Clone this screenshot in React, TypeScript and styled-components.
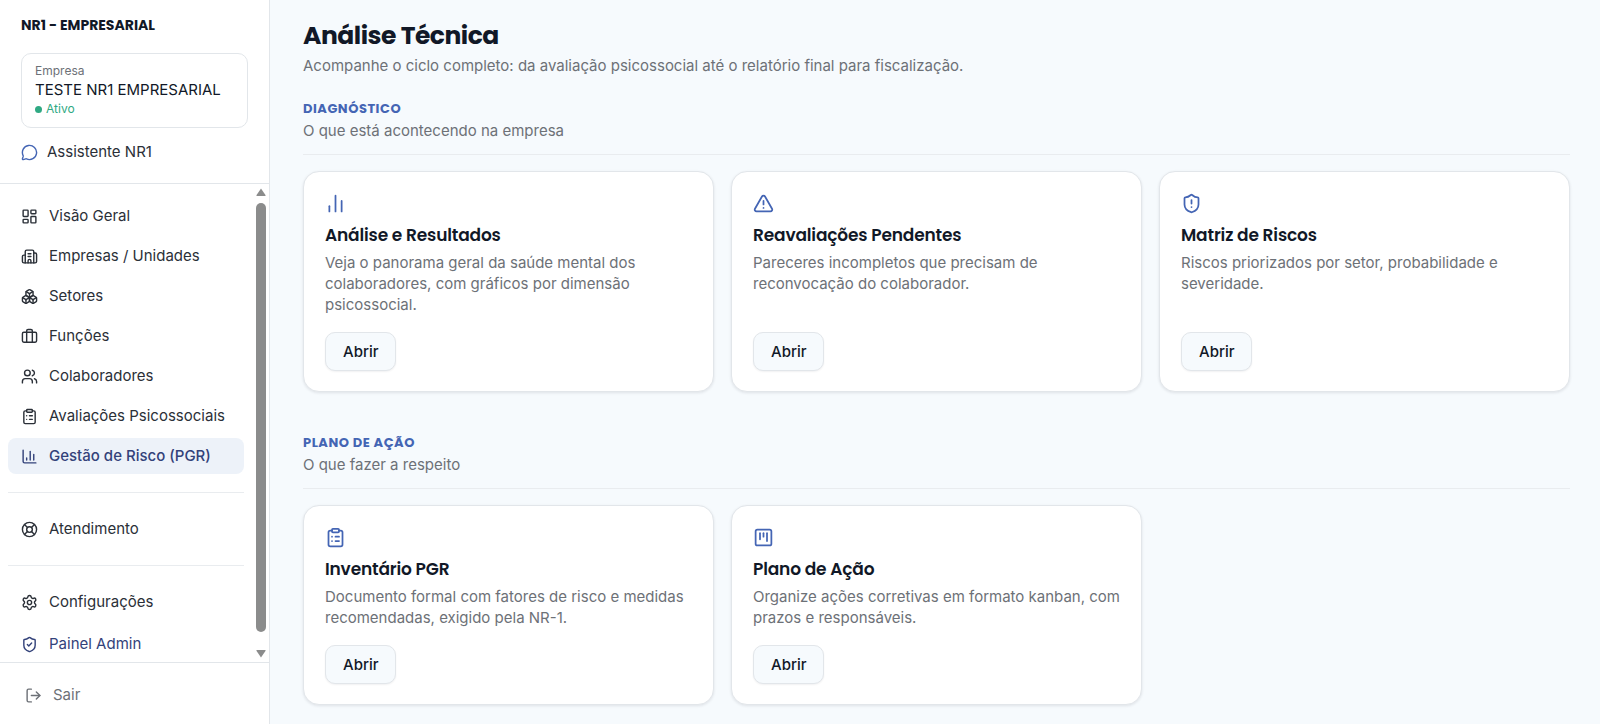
import React from "react";
import styled, { createGlobalStyle } from "styled-components";
import {
  Boxes,
  Briefcase,
  Building2,
  ChartColumn,
  ChartNoAxesColumn,
  ClipboardList,
  LayoutDashboard,
  LifeBuoy,
  LogOut,
  MessageCircle,
  Settings,
  ShieldAlert,
  ShieldCheck,
  SquareKanban,
  TriangleAlert,
  Users,
  type LucideIcon,
} from "lucide-react";

const color = {
  page: "#f6fafd",
  surface: "#ffffff",
  line: "#e2e6ea",
  softLine: "#e9ecef",
  ink: "#111827",
  text: "#2b3038",
  muted: "#6d7177",
  primary: "#4465b4",
  navy: "#33427a",
  active: "#edf2f9",
  green: "#2fa983",
  thumb: "#8b8c8c",
};

const heading = `Poppins, Inter, "Open Sans", sans-serif`;

const GlobalStyle = createGlobalStyle`
  *, *::before, *::after { box-sizing: border-box; }
  body {
    margin: 0;
    background: ${color.page};
    color: ${color.text};
    font-family: Inter, "Liberation Sans", sans-serif;
    font-size: 15px;
    line-height: 22px;
  }
  h1, h2, h3, p { margin: 0; }
  a { color: inherit; text-decoration: none; }
  svg { display: block; flex: none; }
`;

const Shell = styled.div`
  display: flex;
  height: 100vh;
`;

const Sidebar = styled.aside`
  display: flex;
  flex-direction: column;
  flex: none;
  width: 270px;
  background: ${color.surface};
  border-right: 1px solid ${color.line};
`;

const SidebarTop = styled.div`
  display: flex;
  flex-direction: column;
  padding: 14px 21px 20px;
  border-bottom: 1px solid ${color.line};
`;

const Brand = styled.div`
  font-family: ${heading};
  font-size: 14px;
  font-weight: 700;
  line-height: 22px;
  color: ${color.ink};
`;

const Company = styled.div`
  display: flex;
  flex-direction: column;
  margin-top: 17px;
  padding: 8px 13px 9px;
  border: 1px solid ${color.line};
  border-radius: 10px;
`;

const CompanyLabel = styled.span`
  font-size: 12px;
  line-height: 18px;
  color: ${color.muted};
`;

const CompanyName = styled.span`
  line-height: 20px;
  color: ${color.ink};
`;

const Status = styled.span`
  display: flex;
  align-items: center;
  gap: 4px;
  font-size: 12px;
  line-height: 18px;
  color: ${color.green};

  &::before {
    content: "";
    width: 7px;
    height: 7px;
    border-radius: 50%;
    background: currentColor;
  }
`;

const Assistant = styled.a`
  display: flex;
  align-items: center;
  gap: 9px;
  margin-top: 13px;

  svg { color: ${color.primary}; }
`;

const NavArea = styled.div`
  display: flex;
  flex: 1;
  min-height: 0;
`;

const Nav = styled.nav`
  flex: 1;
  padding: 14px 0 0 8px;
  overflow: hidden;
`;

const NavGroup = styled.div<{ $gap: number }>`
  display: flex;
  flex-direction: column;
  gap: ${(p) => p.$gap}px;

  & + & {
    margin-top: 18px;
    padding-top: 18px;
    border-top: 1px solid ${color.softLine};
  }
`;

const NavLink = styled.a<{ $tone: "normal" | "active" | "admin" }>`
  display: flex;
  align-items: center;
  gap: 11px;
  height: 36px;
  padding: 0 13px;
  border-radius: 8px;
  background: ${(p) => (p.$tone === "active" ? color.active : "transparent")};
  color: ${(p) => (p.$tone === "normal" ? color.text : color.navy)};
  font-weight: ${(p) => (p.$tone === "active" ? 500 : 400)};
`;

const Scrollbar = styled.div`
  display: flex;
  flex-direction: column;
  align-items: center;
  gap: 7px;
  flex: none;
  width: 25px;
  padding: 4px 3px 4px 12px;
`;

const Arrow = styled.svg`
  width: 10px;
  height: 8px;
  fill: ${color.thumb};
`;

const Thumb = styled.div`
  flex: 1;
  width: 10px;
  margin-bottom: 11px;
  border-radius: 5px;
  background: ${color.thumb};
`;

const SidebarFoot = styled.div`
  padding: 21px 25px 18px;
  border-top: 1px solid ${color.line};
`;

const Logout = styled.button`
  display: flex;
  align-items: center;
  gap: 11px;
  padding: 0;
  border: 0;
  background: none;
  color: ${color.muted};
  font: inherit;
  cursor: pointer;
`;

const Main = styled.main`
  flex: 1;
  min-width: 0;
  padding: 18px 30px 0 33px;
  overflow: hidden;
`;

const Title = styled.h1`
  font-family: ${heading};
  font-size: 25px;
  font-weight: 700;
  line-height: 36px;
  letter-spacing: -0.02em;
  color: ${color.ink};
`;

const Lead = styled.p`
  padding-top: 1px;
  color: ${color.muted};
`;

const Section = styled.section`
  margin-top: 23px;

  & + & { margin-top: 42px; }
`;

const SectionHead = styled.header`
  display: flex;
  flex-direction: column;
  gap: 2px;
  padding-bottom: 12px;
  border-bottom: 1px solid ${color.softLine};
  color: ${color.muted};
`;

const SectionTitle = styled.h2`
  font-family: ${heading};
  font-size: 13px;
  font-weight: 700;
  line-height: 18px;
  letter-spacing: 0.04em;
  text-transform: uppercase;
  color: ${color.primary};
`;

const Grid = styled.div`
  display: grid;
  grid-template-columns: repeat(3, minmax(0, 1fr));
  gap: 17px;
  margin-top: 16px;
`;

const Card = styled.article`
  display: flex;
  flex-direction: column;
  align-items: flex-start;
  padding: 21px 16px 20px 21px;
  border: 1px solid ${color.line};
  border-radius: 16px;
  background: ${color.surface};
  box-shadow: 0 1px 3px rgba(15, 23, 42, 0.1);

  svg { color: ${color.primary}; }
`;

const CardTitle = styled.h3`
  margin-top: 9px;
  font-family: ${heading};
  font-size: 17px;
  font-weight: 600;
  line-height: 24px;
  letter-spacing: -0.01em;
  color: ${color.ink};
`;

const CardText = styled.p`
  flex: 1;
  margin: 5px 0 17px;
  line-height: 21px;
  color: ${color.muted};
`;

const OpenButton = styled.button`
  height: 39px;
  padding: 0 17px;
  border: 1px solid ${color.line};
  border-radius: 10px;
  background: ${color.page};
  box-shadow: 0 1px 2px rgba(15, 23, 42, 0.06);
  color: ${color.ink};
  font: inherit;
  font-weight: 500;
  cursor: pointer;
`;

type NavItem = { label: string; icon: LucideIcon; tone?: "active" | "admin" };

const navGroups: { gap: number; items: NavItem[] }[] = [
  {
    gap: 4,
    items: [
      { label: "Visão Geral", icon: LayoutDashboard },
      { label: "Empresas / Unidades", icon: Building2 },
      { label: "Setores", icon: Boxes },
      { label: "Funções", icon: Briefcase },
      { label: "Colaboradores", icon: Users },
      { label: "Avaliações Psicossociais", icon: ClipboardList },
      { label: "Gestão de Risco (PGR)", icon: ChartColumn, tone: "active" },
    ],
  },
  { gap: 4, items: [{ label: "Atendimento", icon: LifeBuoy }] },
  {
    gap: 6,
    items: [
      { label: "Configurações", icon: Settings },
      { label: "Painel Admin", icon: ShieldCheck, tone: "admin" },
    ],
  },
];

type CardItem = { title: string; text: string; icon: LucideIcon };

const sections: { title: string; text: string; cards: CardItem[] }[] = [
  {
    title: "Diagnóstico",
    text: "O que está acontecendo na empresa",
    cards: [
      {
        title: "Análise e Resultados",
        text: "Veja o panorama geral da saúde mental dos colaboradores, com gráficos por dimensão psicossocial.",
        icon: ChartNoAxesColumn,
      },
      {
        title: "Reavaliações Pendentes",
        text: "Pareceres incompletos que precisam de reconvocação do colaborador.",
        icon: TriangleAlert,
      },
      {
        title: "Matriz de Riscos",
        text: "Riscos priorizados por setor, probabilidade e severidade.",
        icon: ShieldAlert,
      },
    ],
  },
  {
    title: "Plano de Ação",
    text: "O que fazer a respeito",
    cards: [
      {
        title: "Inventário PGR",
        text: "Documento formal com fatores de risco e medidas recomendadas, exigido pela NR-1.",
        icon: ClipboardList,
      },
      {
        title: "Plano de Ação",
        text: "Organize ações corretivas em formato kanban, com prazos e responsáveis.",
        icon: SquareKanban,
      },
    ],
  },
];

export default function App() {
  return (
    <Shell>
      <GlobalStyle />
      <Sidebar>
        <SidebarTop>
          <Brand>NR1 - EMPRESARIAL</Brand>
          <Company>
            <CompanyLabel>Empresa</CompanyLabel>
            <CompanyName>TESTE NR1 EMPRESARIAL</CompanyName>
            <Status>Ativo</Status>
          </Company>
          <Assistant href="#assistente">
            <MessageCircle size={17} />
            Assistente NR1
          </Assistant>
        </SidebarTop>
        <NavArea>
          <Nav>
            {navGroups.map((group, i) => (
              <NavGroup key={i} $gap={group.gap}>
                {group.items.map(({ label, icon: Icon, tone }) => (
                  <NavLink key={label} href="#" $tone={tone ?? "normal"}>
                    <Icon size={17} />
                    {label}
                  </NavLink>
                ))}
              </NavGroup>
            ))}
          </Nav>
          <Scrollbar aria-hidden="true">
            <Arrow viewBox="0 0 10 8">
              <path d="M5 0.5 9.6 7.2Q9.8 8 9 8H1Q0.2 8 0.4 7.2Z" />
            </Arrow>
            <Thumb />
            <Arrow viewBox="0 0 10 8">
              <path d="M5 7.5 9.6 0.8Q9.8 0 9 0H1Q0.2 0 0.4 0.8Z" />
            </Arrow>
          </Scrollbar>
        </NavArea>
        <SidebarFoot>
          <Logout type="button">
            <LogOut size={17} />
            Sair
          </Logout>
        </SidebarFoot>
      </Sidebar>
      <Main>
        <Title>Análise Técnica</Title>
        <Lead>
          Acompanhe o ciclo completo: da avaliação psicossocial até o relatório final para
          fiscalização.
        </Lead>
        {sections.map((section) => (
          <Section key={section.title}>
            <SectionHead>
              <SectionTitle>{section.title}</SectionTitle>
              <p>{section.text}</p>
            </SectionHead>
            <Grid>
              {section.cards.map(({ title, text, icon: Icon }) => (
                <Card key={title}>
                  <Icon size={21} />
                  <CardTitle>{title}</CardTitle>
                  <CardText>{text}</CardText>
                  <OpenButton type="button">Abrir</OpenButton>
                </Card>
              ))}
            </Grid>
          </Section>
        ))}
      </Main>
    </Shell>
  );
}
